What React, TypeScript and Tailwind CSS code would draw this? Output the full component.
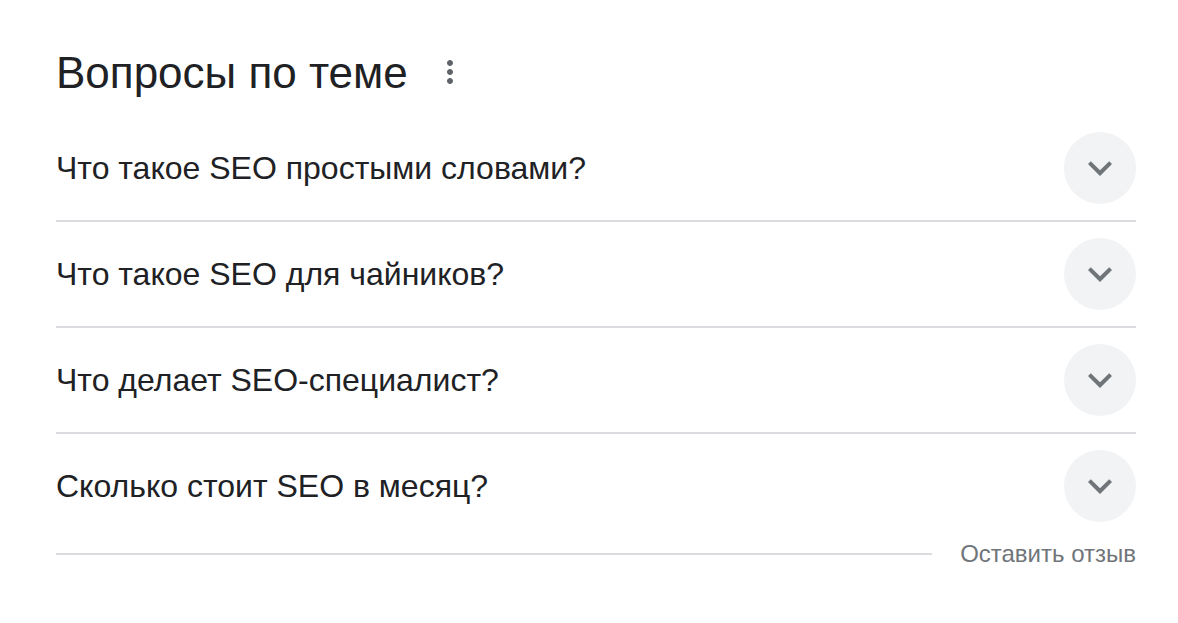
import { useState } from 'react'

// Вопросы по теме — блок "похожие вопросы"
const questions = [
  'Что такое SEO простыми словами?',
  'Что такое SEO для чайников?',
  'Что делает SEO-специалист?',
  'Сколько стоит SEO в месяц?',
]

function MoreIcon() {
  return (
    <svg viewBox="0 0 24 24" className="h-[36px] w-[36px] fill-[#5f6368]" aria-hidden="true">
      <path d="M12 8c1.1 0 2-.9 2-2s-.9-2-2-2-2 .9-2 2 .9 2 2 2zm0 2c-1.1 0-2 .9-2 2s.9 2 2 2 2-.9 2-2-.9-2-2-2zm0 6c-1.1 0-2 .9-2 2s.9 2 2 2 2-.9 2-2-.9-2-2-2z" />
    </svg>
  )
}

function ChevronIcon({ open }: { open: boolean }) {
  return (
    <svg viewBox="0 0 24 24" className={open ? 'h-[48px] w-[48px] rotate-180 fill-[#70757a]' : 'h-[48px] w-[48px] fill-[#70757a]'} aria-hidden="true">
      <path d="M16.59 8.59L12 13.17 7.41 8.59 6 10l6 6 6-6z" />
    </svg>
  )
}

export default function App() {
  const [openIdx, setOpenIdx] = useState<number | null>(null)

  return (
    <div className="min-h-screen bg-white px-[56px] pt-[45px] font-['Liberation_Sans',Arial,sans-serif] text-[#202124]" style={{ width: 1178 }}>
      {/* Заголовок */}
      <div className="flex h-[71px] items-start">
        <h2 className="text-[44px] leading-[56px] font-normal">Вопросы по теме</h2>
        <div className="ml-[24px] mt-[9px]">
          <MoreIcon />
        </div>
      </div>

      {/* Список вопросов */}
      <div className="w-[1080px]">
        {questions.map((q, i) => (
          <div
            key={q}
            className={
              i < questions.length - 1
                ? 'flex h-[106px] items-center justify-between border-b-2 border-[#dadce0] cursor-pointer'
                : 'flex h-[104px] items-center justify-between cursor-pointer'
            }
            onClick={() => setOpenIdx(openIdx === i ? null : i)}
          >
            <span className="text-[32px] leading-[40px]">{q}</span>
            <div className="flex h-[72px] w-[72px] items-center justify-center rounded-full bg-[#f1f3f4]">
              <ChevronIcon open={openIdx === i} />
            </div>
          </div>
        ))}

        {/* Отзыв */}
        <div className="flex h-[32px] items-center">
          <div className="h-[2px] flex-1 bg-[#dadce0]" />
          <span className="ml-[28px] text-[24px] leading-[32px] text-[#70757a]">Оставить отзыв</span>
        </div>
      </div>
    </div>
  )
}
